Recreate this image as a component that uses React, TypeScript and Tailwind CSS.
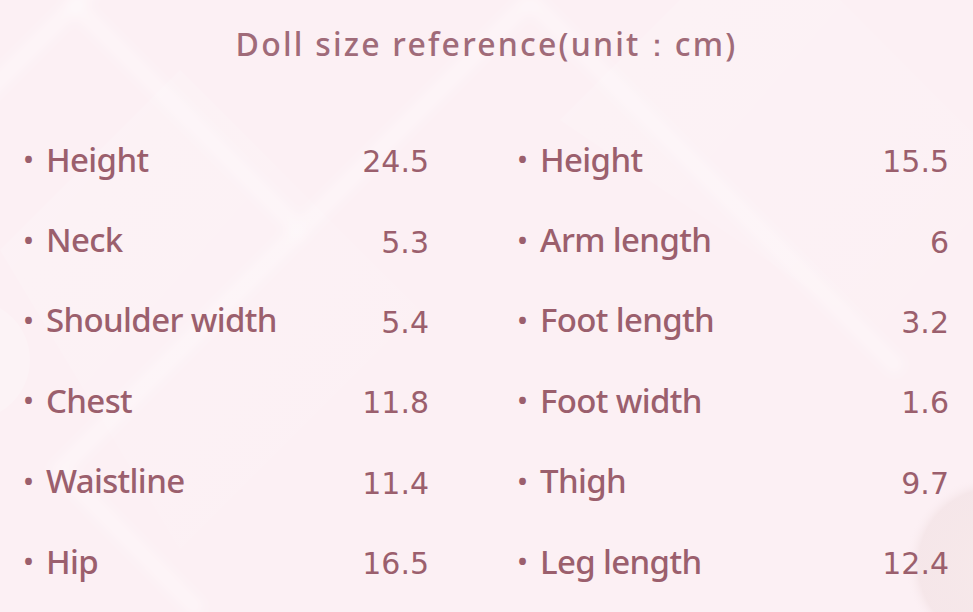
import React from "react";

const left: [string, string][] = [
  ["Height", "24.5"],
  ["Neck", "5.3"],
  ["Shoulder width", "5.4"],
  ["Chest", "11.8"],
  ["Waistline", "11.4"],
  ["Hip", "16.5"],
];
const right: [string, string][] = [
  ["Height", "15.5"],
  ["Arm length", "6"],
  ["Foot length", "3.2"],
  ["Foot width", "1.6"],
  ["Thigh", "9.7"],
  ["Leg length", "12.4"],
];

function Row({ label, value }: { label: string; value: string }) {
  return (
    <div className="flex h-[80.4px] items-center justify-between">
      <div className="flex items-center">
        <span className="w-[22px] text-[24px] leading-none font-['Open_Sans',sans-serif] font-bold">•</span>
        <span className="text-[33px] leading-none font-['Noto_Sans',sans-serif] font-medium tracking-[-0.65px]">
          {label}
        </span>
      </div>
      <span className="mt-[6px] text-[30px] leading-none font-['DejaVu_Sans',sans-serif]">{value}</span>
    </div>
  );
}

export default function App() {
  return (
    <div className="relative h-[612px] w-[973px] overflow-hidden bg-[#fcf0f4] text-[#9b5f6d]">
      <svg className="absolute inset-0" width="973" height="612">
        <defs>
          <linearGradient id="g1" x1="0" y1="0" x2="1" y2="1">
            <stop offset="0" stopColor="#ffffff" stopOpacity="0.5" />
            <stop offset="1" stopColor="#ffffff" stopOpacity="0" />
          </linearGradient>
          <radialGradient id="plate" cx="0.5" cy="0.5" r="0.5">
            <stop offset="0" stopColor="#f6e8e8" stopOpacity="0.8" />
            <stop offset="0.85" stopColor="#f1e0e2" stopOpacity="0.6" />
            <stop offset="1" stopColor="#fcf0f4" stopOpacity="0" />
          </radialGradient>
          <filter id="blur">
            <feGaussianBlur stdDeviation="6" />
          </filter>
        </defs>
        <g stroke="#ffffff" strokeOpacity="0.35" strokeWidth="16" fill="none" filter="url(#blur)">
          <path d="M70 0 L300 230 L530 0" />
          <path d="M300 230 L60 470 L200 612" />
          <path d="M530 0 L900 370" />
          <path d="M-40 120 L120 -40" />
        </g>
        <path d="M0 250 L180 70 L420 310 L180 550 Z" fill="url(#g1)" opacity="0.35" />
        <path d="M560 120 L760 -80 L973 133 L973 400 Z" fill="url(#g1)" opacity="0.35" />
        <circle cx="995" cy="565" r="90" fill="url(#plate)" />
        <circle cx="-30" cy="360" r="60" fill="#ffffff" opacity="0.2" />
      </svg>
      <div className="relative flex flex-col">
        <h1 className="pt-[23px] text-center text-[32px] leading-[42px] tracking-[2.2px] font-['Noto_Sans',sans-serif] font-medium text-[#a06b79]">
          Doll size reference(unit：cm)
        </h1>
        <div className="mt-[54px] grid grid-cols-[405px_431px] gap-x-[89px] pl-[24px]">
          <div className="flex flex-col">
            {left.map(([l, v]) => (
              <Row key={l} label={l} value={v} />
            ))}
          </div>
          <div className="flex flex-col">
            {right.map(([l, v]) => (
              <Row key={l} label={l} value={v} />
            ))}
          </div>
        </div>
      </div>
    </div>
  );
}
